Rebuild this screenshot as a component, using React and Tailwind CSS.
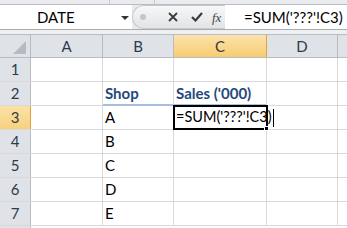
import React from "react";

const cols = [
  { key: "A", w: "w-[72px]" },
  { key: "B", w: "w-[71px]" },
  { key: "C", w: "w-[93px]" },
  { key: "D", w: "w-[71px]" },
];

const rows = [
  { n: 1, b: "", c: "" },
  { n: 2, b: "Shop", c: "Sales ('000)", head: true },
  { n: 3, b: "A", c: "", active: true },
  { n: 4, b: "B", c: "" },
  { n: 5, b: "C", c: "" },
  { n: 6, b: "D", c: "" },
  { n: 7, b: "E", c: "" },
];

const font = { fontFamily: "Lato, 'Open Sans', sans-serif" };

const FormulaBar = () => (
  <div className="flex flex-col bg-[#e9ebee]">
    {/* strip above the bar */}
    <div className="flex h-[5px] border-b border-[#b9bcc1]">
      <div className="w-[110px] border-r border-[#c8cbd0]" />
      <div className="w-[45px] border-r border-[#c8cbd0]" />
    </div>
    <div className="flex h-[24px]">
      {/* name box */}
      <div className="relative flex w-[132px] items-center bg-white">
        <span className="pl-[37px] text-[15px] leading-none text-black">DATE</span>
        <span className="absolute left-[121px] top-[11px] h-0 w-0 border-x-[4px] border-t-[4px] border-x-transparent border-t-[#333]" />
      </div>
      {/* buttons */}
      <div className="flex w-[93px] items-center rounded-l-full border border-r-0 border-[#c6c9ce] bg-gradient-to-b from-[#f6f7f8] to-[#e2e4e7]">
        <span className="ml-[7px] h-[6px] w-[6px] rounded-full bg-[#c3c6cb]" />
        <svg className="ml-[22px]" width="10" height="10" viewBox="0 0 10 10">
          <path d="M1 1 L9 9 M9 1 L1 9" stroke="#3c3c3c" strokeWidth="1.8" />
        </svg>
        <svg className="ml-[13px]" width="12" height="10" viewBox="0 0 12 10">
          <path d="M1 5 L4.5 8.5 L11 1" stroke="#3c3c3c" strokeWidth="2.2" fill="none" />
        </svg>
        <span
          className="ml-[9px] text-[13px] italic leading-none text-[#444]"
          style={{ fontFamily: "'Liberation Serif', serif" }}
        >
          fx
        </span>
      </div>
      {/* formula input */}
      <div className="flex flex-1 items-center bg-white pl-[19px]">
        <span className="text-[15px] leading-none text-black">=SUM('???'!C3)</span>
      </div>
    </div>
    <div className="h-[5px] border-t border-[#a9acb1] bg-[#eef0f2]" />
  </div>
);

const HeaderRow = () => (
  <div className="flex h-[24px] border-y border-[#b8bcc2] bg-[#dfe2e6] text-[15px] text-[#2b3a4f]">
    <div className="relative w-[31px] border-r border-[#b8bcc2]">
      <span className="absolute bottom-[3px] right-[4px] h-0 w-0 border-b-[13px] border-l-[13px] border-b-[#b7bbc1] border-l-transparent" />
    </div>
    {cols.map((c) => (
      <div
        key={c.key}
        className={`${c.w} flex items-center justify-center border-r ${
          c.key === "C"
            ? "border-[#e2a33f] bg-gradient-to-b from-[#fbe3ae] to-[#f6cc6e] text-[#3b3b3b]"
            : "border-[#b8bcc2]"
        }`}
      >
        {c.key}
      </div>
    ))}
    <div className="flex-1" />
  </div>
);

const Row = ({ r }) => (
  <div className="flex h-[24px] border-b border-[#d9d9d9] text-[15px]">
    <div
      className={`flex w-[31px] items-center justify-center border-r ${
        r.active
          ? "border-[#e2a33f] bg-gradient-to-b from-[#fbe2a9] to-[#f7d27c] text-[#3b3b3b]"
          : "border-[#b8bcc2] bg-[#dfe2e6] text-[#2b3a4f]"
      }`}
    >
      {r.n}
    </div>
    <div className="w-[72px] border-r border-[#d9d9d9]" />
    <div
      className={`relative flex w-[71px] items-end border-r border-[#d9d9d9] pb-[1px] pl-[2px] ${
        r.head ? "font-bold text-[#1f497d]" : "text-black"
      }`}
    >
      {r.b}
      {r.head && <span className="absolute -bottom-[1px] left-0 right-0 h-[2px] bg-[#a7bfde]" />}
    </div>
    <div className="relative flex w-[93px] items-end border-r border-[#d9d9d9] pb-[1px] pl-[2px] font-bold text-[#1f497d]">
      {r.c}
      {r.head && <span className="absolute -bottom-[1px] left-0 right-0 h-[2px] bg-[#a7bfde]" />}
      {r.active && (
        <div className="absolute -left-[1px] -top-[1px] z-10 flex h-[25px] w-[95px] items-center border-2 border-black bg-white pl-[1px]">
          <span className="whitespace-nowrap text-[14.5px] font-normal leading-none text-black">
            =SUM('???'!C3)
          </span>
          <span className="ml-[1px] h-[18px] w-[1px] shrink-0 bg-black" />
          <span className="absolute -bottom-[3px] -right-[3px] h-[5px] w-[5px] border border-white bg-black" />
        </div>
      )}
    </div>
    <div className="w-[71px] border-r border-[#d9d9d9]" />
    <div className="flex-1" />
  </div>
);

export default function App() {
  return (
    <div className="h-[228px] w-[347px] overflow-hidden bg-white" style={font}>
      <FormulaBar />
      <HeaderRow />
      {rows.map((r) => (
        <Row key={r.n} r={r} />
      ))}
      <div className="flex h-[24px]">
        <div className="w-[31px] border-r border-[#b8bcc2] bg-[#dfe2e6]" />
      </div>
    </div>
  );
}
